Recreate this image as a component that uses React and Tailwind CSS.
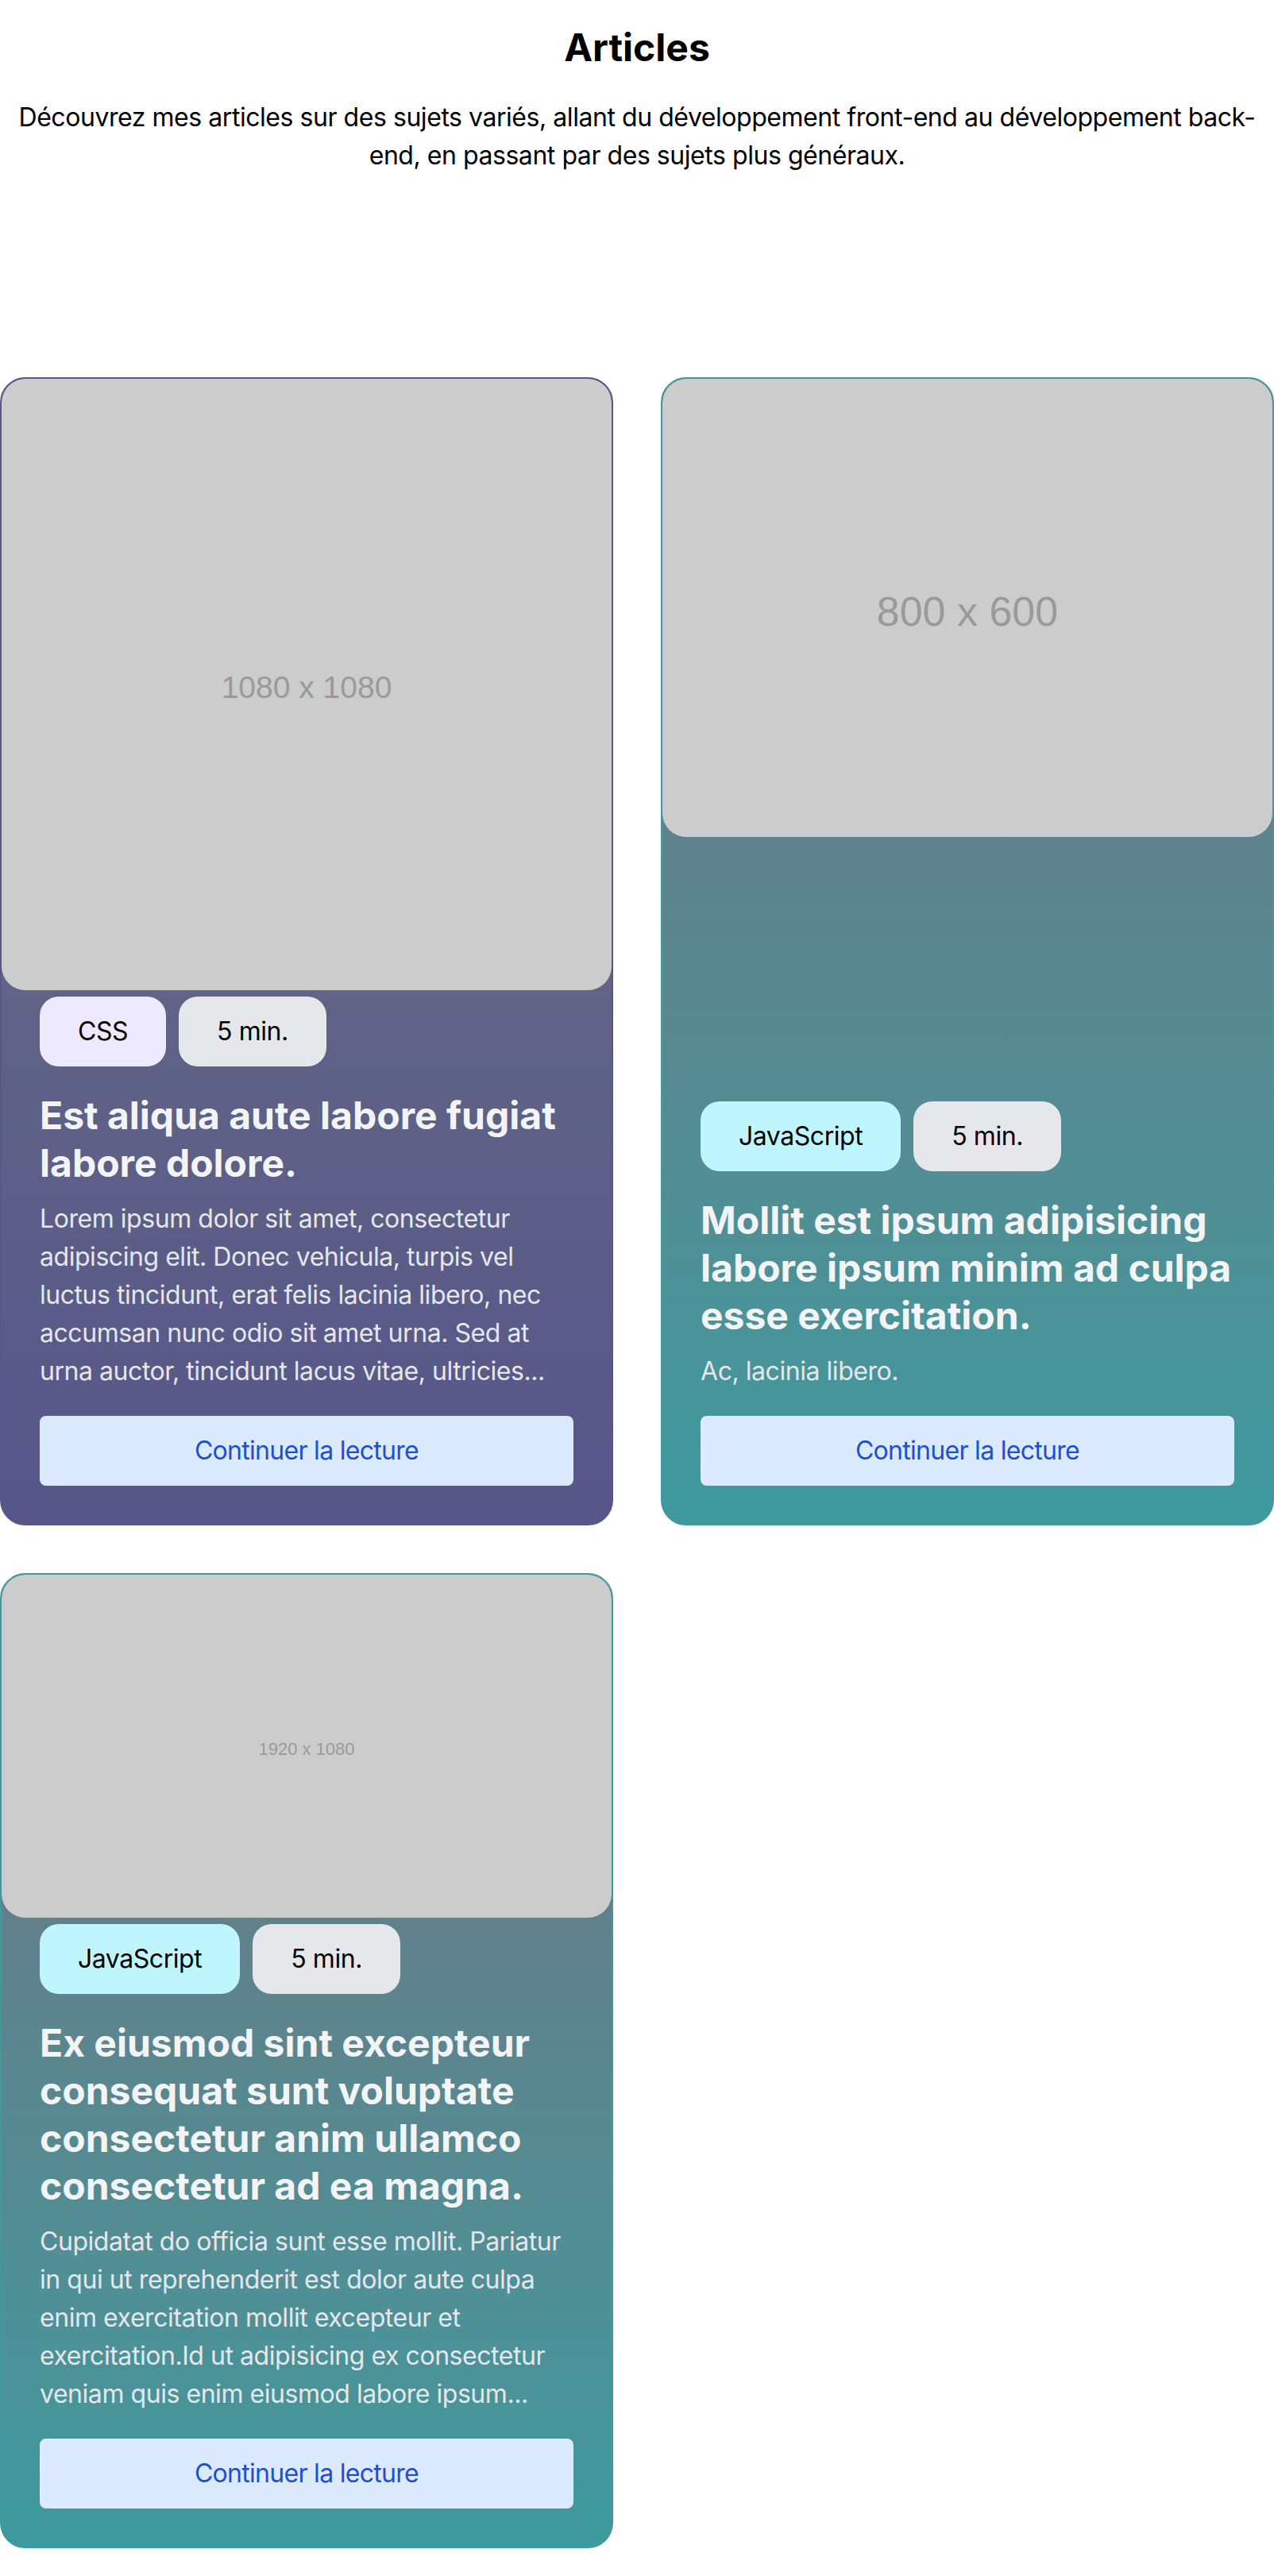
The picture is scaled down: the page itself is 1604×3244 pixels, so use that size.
import React from 'react';

const articles = [
    {
        id: 1,
        image: '1080 x 1080',
        imageHeight: 'h-[770px]',
        imageText: 'text-[39px]',
        tag: 'CSS',
        tagColor: 'bg-[#ede9fe]',
        card: 'border-[#58578a] from-[#6b7280] to-[#57568a]',
        title: 'Est aliqua aute labore fugiat labore dolore.',
        excerpt:
            'Lorem ipsum dolor sit amet, consectetur adipiscing elit. Donec vehicula, turpis vel luctus tincidunt, erat felis lacinia libero, nec accumsan nunc odio sit amet urna. Sed at urna auctor, tincidunt lacus vitae, ultricies...',
    },
    {
        id: 2,
        image: '800 x 600',
        imageHeight: 'h-[577px]',
        imageText: 'text-[52px]',
        tag: 'JavaScript',
        tagColor: 'bg-[#bff5fd]',
        card: 'border-[#3e9a9e] from-[#6b7280] to-[#3d9a9e]',
        title: 'Mollit est ipsum adipisicing labore ipsum minim ad culpa esse exercitation.',
        excerpt: 'Ac, lacinia libero.',
    },
    {
        id: 3,
        image: '1920 x 1080',
        imageHeight: 'h-[432px]',
        imageText: 'text-[22px]',
        tag: 'JavaScript',
        tagColor: 'bg-[#bff5fd]',
        card: 'border-[#3e9a9e] from-[#6b7280] to-[#3d9a9e]',
        title: 'Ex eiusmod sint excepteur consequat sunt voluptate consectetur anim ullamco consectetur ad ea magna.',
        excerpt:
            'Cupidatat do officia sunt esse mollit. Pariatur in qui ut reprehenderit est dolor aute culpa enim exercitation mollit excepteur et exercitation.Id ut adipisicing ex consectetur veniam quis enim eiusmod labore ipsum...',
    },
];

const Placeholder = ({ label, height, size }) => (
    <div
        className={`${height} w-full shrink-0 rounded-[30px] bg-[#cccccc] flex items-center justify-center pt-[8px] text-[#9a9a9a] tracking-normal font-['Liberation_Sans',Arial,sans-serif] ${size}`}
    >
        {label}
    </div>
);

const ArticleCard = ({ article }) => (
    <div className={`flex flex-col rounded-[32px] border-2 overflow-hidden bg-linear-to-b ${article.card}`}>
        <Placeholder label={article.image} height={article.imageHeight} size={article.imageText} />

        <div className="mt-auto flex flex-col px-12 pb-12 pt-2">
            {/* Tags */}
            <div className="flex gap-4">
                <span className={`px-12 py-5 rounded-[24px] text-black ${article.tagColor}`}>{article.tag}</span>
                <span className="px-12 py-5 rounded-[24px] text-black bg-[#e5e7eb]">5 min.</span>
            </div>

            <h3 className="mt-8 text-[48px] leading-[60px] font-bold tracking-normal text-[#f3f4f6]">{article.title}</h3>
            <p className="mt-4 text-[#e5e7eb]">{article.excerpt}</p>

            <button
                type="button"
                className="mt-8 w-full py-5 rounded-[8px] bg-[#dbeafe] text-[#1d4ed8] tracking-[-0.7px] hover:bg-[#bfdbfe] transition duration-200"
            >
                Continuer la lecture
            </button>
        </div>
    </div>
);

const App = () => {
    return (
        <div className="min-h-screen bg-white font-['Inter',sans-serif] text-[32px] leading-[48px] tracking-[-0.45px] text-black pb-[34px]">
            <header className="px-2 pt-[28px] text-center">
                <h2 className="text-[48px] leading-[64px] font-bold tracking-normal">Articles</h2>
                <p className="mt-8">
                    Découvrez mes articles sur des sujets variés, allant du développement front-end au développement
                    back-end, en passant par des sujets plus généraux.
                </p>
            </header>

            <section className="mt-[255px] grid grid-cols-2 gap-[60px]">
                {articles.map((article) => (
                    <ArticleCard key={article.id} article={article} />
                ))}
            </section>
        </div>
    );
};

export default App;
